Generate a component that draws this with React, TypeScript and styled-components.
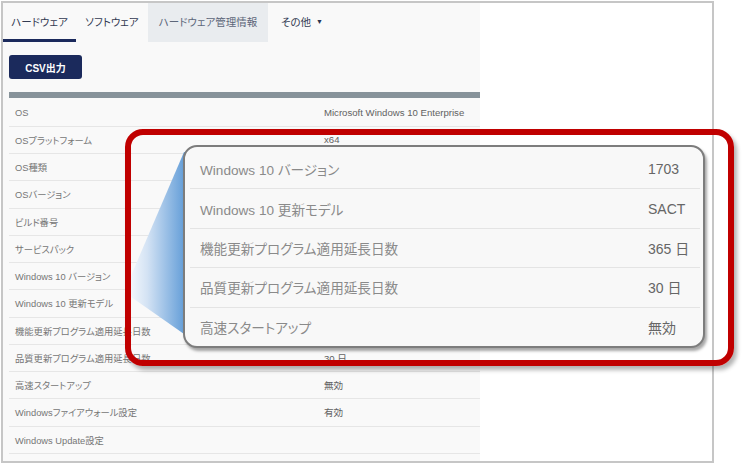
import { createGlobalStyle, styled } from "styled-components";

const GlobalStyle = createGlobalStyle`
  html, body {
    margin: 0;
    padding: 0;
    background: #ffffff;
  }
  body {
    font-family: "Liberation Sans", "Noto Sans CJK JP", sans-serif;
    font-feature-settings: "palt";
  }
`;

const Screen = styled.div`
  position: relative;
  width: 744px;
  height: 464px;
  overflow: hidden;
  background: #ffffff;
`;

const Frame = styled.div`
  margin: 1px 0 0 1px;
  width: 709px;
  height: 458px;
  border: 2px solid #c6c6c6;
  display: flex;
`;

const Page = styled.div`
  width: 477px;
  background: #f9f9f9;
  display: flex;
  flex-direction: column;
`;

const TabBar = styled.div`
  display: flex;
  height: 39px;
`;

const Tab = styled.div<{ $w: number; $active?: boolean; $shaded?: boolean }>`
  width: ${(p) => p.$w}px;
  box-sizing: border-box;
  display: flex;
  align-items: center;
  justify-content: center;
  padding-top: 1px;
  border-bottom: 3px solid ${(p) => (p.$active ? "#1b2a5c" : "transparent")};
  background: ${(p) => (p.$shaded ? "#e9ecef" : "transparent")};
  color: ${(p) => (p.$shaded ? "#5d677a" : "#323a52")};
  font-size: 10.5px;
`;

const Caret = styled.span`
  font-size: 7px;
  margin-left: 5px;
  color: #2a3350;
`;

const Toolbar = styled.div`
  padding: 13px 0 13px 6px;
`;

const CsvButton = styled.button`
  width: 73px;
  height: 24px;
  border: none;
  border-radius: 3px;
  background: #1b2a5c;
  color: #ffffff;
  font-family: inherit;
  font-size: 10px;
  font-weight: 700;
  padding: 0;
`;

const HeadBar = styled.div`
  margin-left: 6px;
  height: 6px;
  background: #87939a;
`;

const Table = styled.div`
  margin: 1.5px 0 0 6px;
`;

const Row = styled.div`
  display: grid;
  grid-template-columns: 315px 1fr;
  align-items: center;
  height: 27.25px;
  box-sizing: border-box;
  border-bottom: 1px solid #e6e6e6;
`;

const Label = styled.span`
  padding-left: 6px;
  font-size: 9.3px;
  color: #767676;
  white-space: nowrap;
`;

const Value = styled.span`
  font-size: 9.6px;
  color: #626262;
  white-space: nowrap;
`;

const Pointer = styled.svg`
  position: absolute;
  left: 118px;
  top: 146px;
`;

const Callout = styled.div`
  position: absolute;
  left: 183px;
  top: 145px;
  width: 510px;
  height: 197px;
  padding: 2px 3px 0 5px;
  border: 2px solid #7d7d7d;
  border-radius: 14px;
  background: #f8f8f8;
  box-shadow: 2px 3px 3px rgba(0, 0, 0, 0.35);
`;

const CalloutRow = styled.div`
  display: grid;
  grid-template-columns: 1fr 52px;
  align-items: center;
  height: 39.4px;
  box-sizing: border-box;
  & + & {
    border-top: 1px solid #e4e4e4;
  }
`;

const CalloutLabel = styled.span`
  padding-left: 10px;
  font-size: 13.6px;
  color: #8a8a8a;
`;

const CalloutValue = styled.span`
  font-size: 14px;
  color: #666666;
  white-space: nowrap;
`;

const Highlight = styled.div`
  position: absolute;
  left: 125px;
  top: 129px;
  width: 597px;
  height: 225px;
  border: 6px solid #c00000;
  border-radius: 18px;
  box-shadow: 3px 4px 4px rgba(0, 0, 0, 0.3);
`;

// values hidden behind the callout are left blank
const rows: [string, string][] = [
  ["OS", "Microsoft Windows 10 Enterprise"],
  ["OSプラットフォーム", "x64"],
  ["OS種類", ""],
  ["OSバージョン", ""],
  ["ビルド番号", ""],
  ["サービスパック", ""],
  ["Windows 10 バージョン", ""],
  ["Windows 10 更新モデル", ""],
  ["機能更新プログラム適用延長日数", ""],
  ["品質更新プログラム適用延長日数", "30 日"],
  ["高速スタートアップ", "無効"],
  ["Windowsファイアウォール設定", "有効"],
  ["Windows Update設定", ""],
];

const details: [string, string][] = [
  ["Windows 10 バージョン", "1703"],
  ["Windows 10 更新モデル", "SACT"],
  ["機能更新プログラム適用延長日数", "365 日"],
  ["品質更新プログラム適用延長日数", "30 日"],
  ["高速スタートアップ", "無効"],
];

export default function App() {
  return (
    <Screen>
      <GlobalStyle />
      <Frame>
        <Page>
          <TabBar>
            <Tab $w={73} $active>
              ハードウェア
            </Tab>
            <Tab $w={72}>ソフトウェア</Tab>
            <Tab $w={120} $shaded>
              ハードウェア管理情報
            </Tab>
            <Tab $w={68}>
              その他<Caret>▼</Caret>
            </Tab>
          </TabBar>
          <Toolbar>
            <CsvButton>CSV出力</CsvButton>
          </Toolbar>
          <HeadBar />
          <Table>
            {rows.map(([label, value]) => (
              <Row key={label}>
                <Label>{label}</Label>
                <Value>{value}</Value>
              </Row>
            ))}
          </Table>
        </Page>
      </Frame>

      <Pointer width="72" height="194" viewBox="0 0 72 194">
        <defs>
          <linearGradient id="pointerFill" x1="0" y1="0" x2="1" y2="0">
            <stop offset="0" stopColor="#ffffff" />
            <stop offset="0.35" stopColor="#d4e3f4" />
            <stop offset="1" stopColor="#5494d4" />
          </linearGradient>
        </defs>
        <polygon points="66,6 72,6 72,188 66,188 6,146" fill="url(#pointerFill)" />
      </Pointer>

      <Callout>
        {details.map(([label, value]) => (
          <CalloutRow key={label}>
            <CalloutLabel>{label}</CalloutLabel>
            <CalloutValue>{value}</CalloutValue>
          </CalloutRow>
        ))}
      </Callout>

      <Highlight />
    </Screen>
  );
}
